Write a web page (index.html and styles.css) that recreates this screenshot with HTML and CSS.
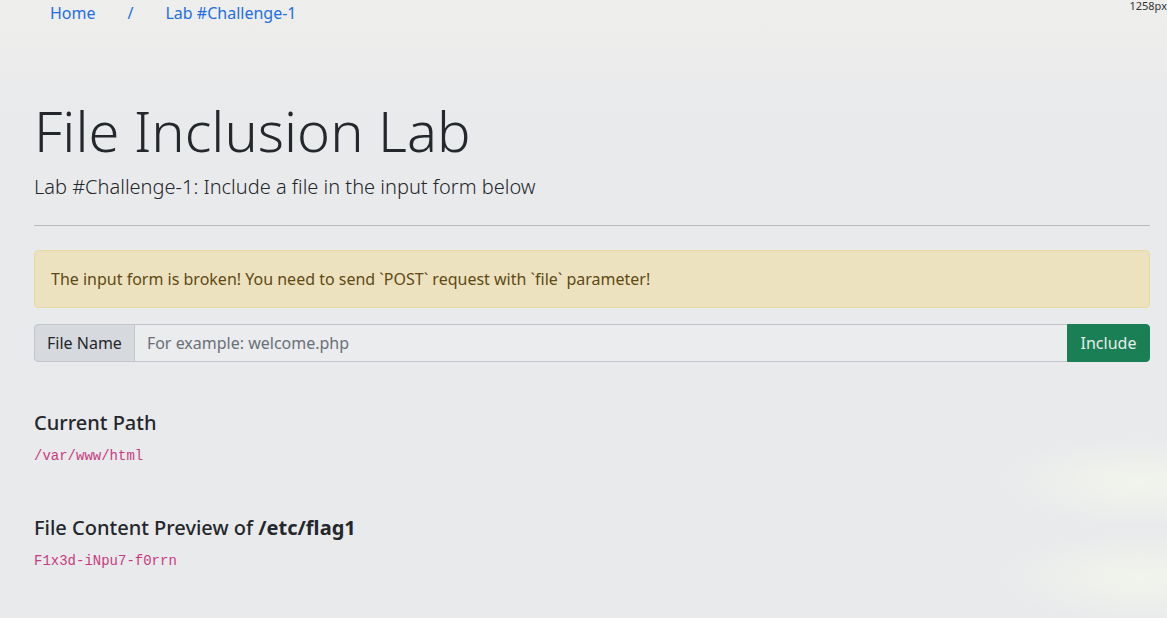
FILE: index.html
```html
<!DOCTYPE html>
<html lang="en">
<head>
<meta charset="utf-8">
<title>File Inclusion Lab</title>
<link rel="stylesheet" href="styles.css">
</head>
<body>
<div class="vw">1258px</div>
<nav class="crumbs">
  <a class="crumb" href="#">Home</a>
  <a class="crumb" href="#">/</a>
  <a class="crumb" href="#">Lab #Challenge-1</a>
</nav>
<main class="container">
  <h1 class="title">File Inclusion Lab</h1>
  <p class="lead">Lab #Challenge-1: Include a file in the input form below</p>
  <hr class="rule">
  <div class="alert">The input form is broken! You need to send `POST` request with `file` parameter!</div>
  <form class="input-group">
    <span class="addon">File Name</span>
    <input class="field" type="text" placeholder="For example: welcome.php">
    <button class="btn" type="button">Include</button>
  </form>
  <section class="block first">
    <h5 class="sub">Current Path</h5>
    <code class="code">/var/www/html</code>
  </section>
  <section class="block">
    <h5 class="sub">File Content Preview of <b>/etc/flag1</b></h5>
    <code class="code">F1x3d-iNpu7-f0rrn</code>
  </section>
</main>
</body>
</html>
```
FILE: styles.css
```css
html, body { margin: 0; padding: 0; }
body {
  width: 1167px;
  height: 618px;
  overflow: hidden;
  position: relative;
  font-family: "Noto Sans", "Open Sans", sans-serif;
  color: #24272b;
  background:
    radial-gradient(ellipse 140px 45px at 1140px 482px, rgba(244,248,236,0.75), rgba(244,248,236,0) 100%),
    radial-gradient(ellipse 140px 45px at 1140px 577px, rgba(244,248,236,0.75), rgba(244,248,236,0) 100%),
    linear-gradient(to bottom, #eeeeec 0px, #ececec 60px, #e9eaec 110px, #e9eaec 100%);
}
.vw {
  position: absolute;
  top: 0;
  right: 0;
  font-size: 11px;
  line-height: 12px;
  color: #333;
}
.crumbs {
  display: flex;
  padding: 0 0 0 34px;
  height: 25px;
  align-items: center;
}
.crumb {
  padding: 0 16px;
  font-size: 16px;
  line-height: 24px;
  color: #1f6fe0;
  text-decoration: none;
}
.container {
  padding: 0 17px 0 34px;
  margin-top: 75px;
}
.title {
  margin: 0;
  font-size: 56px;
  font-weight: 300;
  line-height: 1.1;
  color: #24272b;
}
.lead {
  margin: 10px 0 0;
  font-size: 20px;
  font-weight: 300;
  line-height: 30px;
  color: #24272b;
}
.rule {
  margin: 23px 0 0;
  border: 0;
  border-top: 1px solid #b9babc;
  height: 0;
}
.alert {
  margin-top: 24px;
  padding: 16px;
  border: 1px solid #e6da9e;
  border-radius: 4px;
  background: #ece2c0;
  color: #5e4a12;
  font-size: 16px;
  line-height: 24px;
}
.input-group {
  display: flex;
  margin: 16px 0 0;
  height: 38px;
}
.addon {
  display: flex;
  align-items: center;
  padding: 0 12px;
  background: #d6d9de;
  border: 1px solid #c2c5cb;
  border-radius: 4px 0 0 4px;
  font-size: 16px;
  color: #24272b;
}
.field {
  flex: 1;
  margin: 0 0 0 -1px;
  padding: 0 12px;
  border: 1px solid #c2c5cb;
  border-radius: 0;
  background: #ebecee;
  font-family: inherit;
  font-size: 16px;
  color: #24272b;
  outline: none;
}
.field::placeholder { color: #697077; }
.btn {
  margin-left: -1px;
  padding: 0 12px;
  border: 1px solid #1b7f55;
  border-radius: 0 4px 4px 0;
  background: #1b7f55;
  color: #e8ece9;
  font-family: inherit;
  font-size: 16px;
  width: 83px;
}
.block { margin-top: 49px; }
.block.first { margin-top: 49px; }
.sub {
  margin: 0 0 11px;
  font-size: 20px;
  font-weight: 500;
  line-height: 24px;
  color: #24272b;
}
.sub b { font-weight: 700; }
.code {
  display: block;
  font-family: "Liberation Mono", monospace;
  font-size: 14px;
  line-height: 21px;
  color: #c83c7f;
}
```
